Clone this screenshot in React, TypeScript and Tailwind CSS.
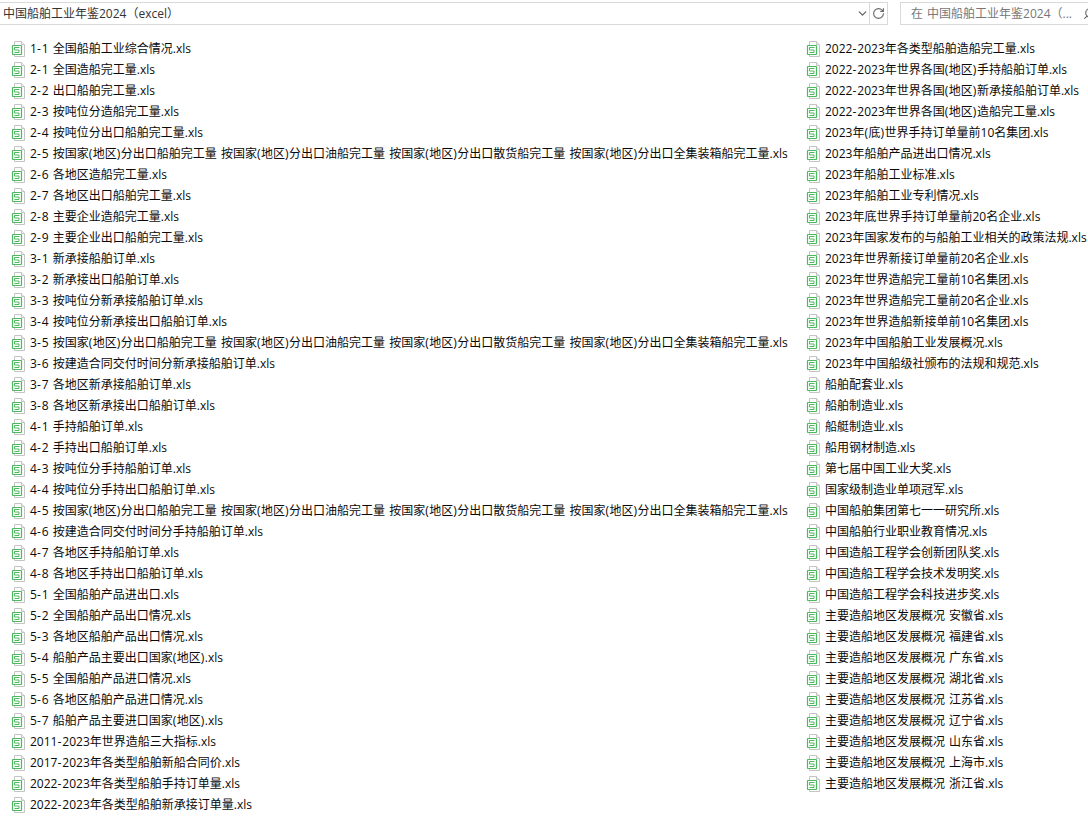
import { ChevronDown, RotateCw, Search } from 'lucide-react';

const leftFiles = [
  '1-1 全国船舶工业综合情况.xls',
  '2-1 全国造船完工量.xls',
  '2-2 出口船舶完工量.xls',
  '2-3 按吨位分造船完工量.xls',
  '2-4 按吨位分出口船舶完工量.xls',
  '2-5 按国家(地区)分出口船舶完工量 按国家(地区)分出口油船完工量 按国家(地区)分出口散货船完工量 按国家(地区)分出口全集装箱船完工量.xls',
  '2-6 各地区造船完工量.xls',
  '2-7 各地区出口船舶完工量.xls',
  '2-8 主要企业造船完工量.xls',
  '2-9 主要企业出口船舶完工量.xls',
  '3-1 新承接船舶订单.xls',
  '3-2 新承接出口船舶订单.xls',
  '3-3 按吨位分新承接船舶订单.xls',
  '3-4 按吨位分新承接出口船舶订单.xls',
  '3-5 按国家(地区)分出口船舶完工量 按国家(地区)分出口油船完工量 按国家(地区)分出口散货船完工量 按国家(地区)分出口全集装箱船完工量.xls',
  '3-6 按建造合同交付时间分新承接船舶订单.xls',
  '3-7 各地区新承接船舶订单.xls',
  '3-8 各地区新承接出口船舶订单.xls',
  '4-1 手持船舶订单.xls',
  '4-2 手持出口船舶订单.xls',
  '4-3 按吨位分手持船舶订单.xls',
  '4-4 按吨位分手持出口船舶订单.xls',
  '4-5 按国家(地区)分出口船舶完工量 按国家(地区)分出口油船完工量 按国家(地区)分出口散货船完工量 按国家(地区)分出口全集装箱船完工量.xls',
  '4-6 按建造合同交付时间分手持船舶订单.xls',
  '4-7 各地区手持船舶订单.xls',
  '4-8 各地区手持出口船舶订单.xls',
  '5-1 全国船舶产品进出口.xls',
  '5-2 全国船舶产品出口情况.xls',
  '5-3 各地区船舶产品出口情况.xls',
  '5-4 船舶产品主要出口国家(地区).xls',
  '5-5 全国船舶产品进口情况.xls',
  '5-6 各地区船舶产品进口情况.xls',
  '5-7 船舶产品主要进口国家(地区).xls',
  '2011-2023年世界造船三大指标.xls',
  '2017-2023年各类型船舶新船合同价.xls',
  '2022-2023年各类型船舶手持订单量.xls',
  '2022-2023年各类型船舶新承接订单量.xls',
];

const rightFiles = [
  '2022-2023年各类型船舶造船完工量.xls',
  '2022-2023年世界各国(地区)手持船舶订单.xls',
  '2022-2023年世界各国(地区)新承接船舶订单.xls',
  '2022-2023年世界各国(地区)造船完工量.xls',
  '2023年(底)世界手持订单量前10名集团.xls',
  '2023年船舶产品进出口情况.xls',
  '2023年船舶工业标准.xls',
  '2023年船舶工业专利情况.xls',
  '2023年底世界手持订单量前20名企业.xls',
  '2023年国家发布的与船舶工业相关的政策法规.xls',
  '2023年世界新接订单量前20名企业.xls',
  '2023年世界造船完工量前10名集团.xls',
  '2023年世界造船完工量前20名企业.xls',
  '2023年世界造船新接单前10名集团.xls',
  '2023年中国船舶工业发展概况.xls',
  '2023年中国船级社颁布的法规和规范.xls',
  '船舶配套业.xls',
  '船舶制造业.xls',
  '船艇制造业.xls',
  '船用钢材制造.xls',
  '第七届中国工业大奖.xls',
  '国家级制造业单项冠军.xls',
  '中国船舶集团第七一一研究所.xls',
  '中国船舶行业职业教育情况.xls',
  '中国造船工程学会创新团队奖.xls',
  '中国造船工程学会技术发明奖.xls',
  '中国造船工程学会科技进步奖.xls',
  '主要造船地区发展概况 安徽省.xls',
  '主要造船地区发展概况 福建省.xls',
  '主要造船地区发展概况 广东省.xls',
  '主要造船地区发展概况 湖北省.xls',
  '主要造船地区发展概况 江苏省.xls',
  '主要造船地区发展概况 辽宁省.xls',
  '主要造船地区发展概况 山东省.xls',
  '主要造船地区发展概况 上海市.xls',
  '主要造船地区发展概况 浙江省.xls',
];

function FileIcon() {
  return (
    <svg width="16" height="17" viewBox="0 0 16 17" className="shrink-0">
      <path d="M3.5 1.5H10.5L13.5 4.5V16.5H3.5Z" fill="#fff" stroke="#c4c4c4" />
      <path d="M10.5 1.5V4.5H13.5" fill="#f2f2f2" stroke="#c4c4c4" />
      <rect x="1.5" y="5.5" width="9" height="9" rx="0.5" fill="#fff" stroke="#4cb860" strokeWidth="1.2" />
      <path d="M8.5 7.5H3.5V10H8V12.5H3.5" fill="none" stroke="#4cb860" />
    </svg>
  );
}

// hyphen and brackets run wider in the original font
function FileName(props: { name: string }) {
  return (
    <span>
      {props.name.split(/([-()])/).map((part, i) => (
        <span key={i} className={part === '-' ? 'tracking-[1px]' : part === '(' || part === ')' ? 'tracking-[0.5px]' : ''}>
          {part}
        </span>
      ))}
    </span>
  );
}

function FileRow(props: { name: string }) {
  return (
    <div className="flex h-[21px] items-center gap-[3px] whitespace-nowrap">
      <FileIcon />
      <FileName name={props.name} />
    </div>
  );
}

export default function App() {
  return (
    <div className="h-[816px] w-[1088px] overflow-hidden bg-white font-['Open_Sans','Noto_Sans_CJK_SC',sans-serif] text-xs text-[#0a0a0a] [word-spacing:1px]">
      <div className="flex h-[25px] pt-[2px]">
        <div className="flex flex-1 items-center border-y border-r border-[#d9d9d9] pl-[3px]">
          <span className="flex-1 truncate text-[#333]">中国船舶工业年鉴2024（excel）</span>
          <ChevronDown size={13} strokeWidth={2.5} className="text-[#666]" />
          <div className="flex h-full w-[18px] items-center justify-center border-l border-[#d9d9d9]">
            <RotateCw size={13} className="text-[#666]" />
          </div>
        </div>
        <div className="ml-3 flex w-[188px] items-center overflow-hidden border-y border-l border-[#d9d9d9] pl-[10px] text-[#777]">
          <span className="flex-1 truncate">在 中国船舶工业年鉴2024（...</span>
          <Search size={13} className="-mr-[8px] ml-[3px] shrink-0 -scale-x-100 text-[#666]" />
        </div>
      </div>
      <div className="grid grid-cols-[795px_1fr] pl-[11px] pt-[13px]">
        <div>
          {leftFiles.map(name => (
            <FileRow key={name} name={name} />
          ))}
        </div>
        <div>
          {rightFiles.map(name => (
            <FileRow key={name} name={name} />
          ))}
        </div>
      </div>
    </div>
  );
}
